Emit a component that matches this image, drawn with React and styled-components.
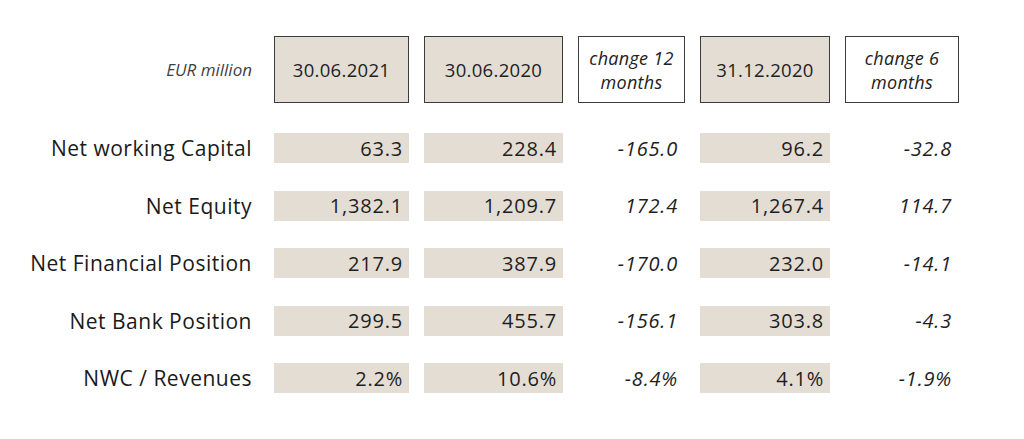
import React from "react";
import styled, { createGlobalStyle } from "styled-components";

const GlobalStyle = createGlobalStyle`
  html, body {
    margin: 0;
    padding: 0;
    background: #ffffff;
  }
  body {
    font-family: "Open Sans", "Noto Sans", "Liberation Sans", sans-serif;
    color: #1e1e1e;
  }
`;

const Page = styled.div`
  width: 1024px;
  height: 439px;
  box-sizing: border-box;
  padding-top: 36px;
`;

const Table = styled.div`
  display: grid;
  grid-template-columns: 259px 135px 139px 107px 130px 114px;
  grid-template-rows: 69.5px repeat(5, 30px);
  column-gap: 15px;
  row-gap: 27.5px;
`;

const Unit = styled.div`
  height: 67px;
  display: flex;
  align-items: center;
  justify-content: flex-end;
  padding-right: 7px;
  font-size: 17px;
  font-style: italic;
  color: #3f3f3f;
`;

const HeadBox = styled.div`
  box-sizing: border-box;
  height: 67px;
  display: flex;
  align-items: center;
  justify-content: center;
  text-align: center;
  border: 1px solid #3c3c3c;
  background: ${({ shaded }) => (shaded ? "#e4ddd4" : "#ffffff")};
  font-size: ${({ shaded }) => (shaded ? "18.5px" : "18px")};
  font-style: ${({ shaded }) => (shaded ? "normal" : "italic")};
  line-height: 24px;
  color: #222222;
  letter-spacing: 0.3px;
`;

const Label = styled.div`
  display: flex;
  align-items: center;
  justify-content: flex-end;
  padding-right: 7px;
  font-size: 21px;
  color: #1a1a1a;
  white-space: nowrap;
  letter-spacing: 0.5px;
`;

const Value = styled.div`
  display: flex;
  align-items: center;
  justify-content: flex-end;
  padding-right: ${({ shaded }) => (shaded ? "6px" : "7px")};
  background: ${({ shaded }) => (shaded ? "#e4ddd4" : "transparent")};
  font-size: 20px;
  font-style: ${({ shaded }) => (shaded ? "normal" : "italic")};
  color: #1e1e1e;
  letter-spacing: 0.8px;
  white-space: nowrap;
`;

const headers = [
  { text: "30.06.2021", shaded: true },
  { text: "30.06.2020", shaded: true },
  { text: ["change 12", "months"], shaded: false },
  { text: "31.12.2020", shaded: true },
  { text: ["change 6", "months"], shaded: false },
];

const rows = [
  ["Net working Capital", "63.3", "228.4", "-165.0", "96.2", "-32.8"],
  ["Net Equity", "1,382.1", "1,209.7", "172.4", "1,267.4", "114.7"],
  ["Net Financial Position", "217.9", "387.9", "-170.0", "232.0", "-14.1"],
  ["Net Bank Position", "299.5", "455.7", "-156.1", "303.8", "-4.3"],
  ["NWC / Revenues", "2.2%", "10.6%", "-8.4%", "4.1%", "-1.9%"],
];

const shadedCols = [true, true, false, true, false];

export default function App() {
  return (
    <Page>
      <GlobalStyle />
      <Table>
        <Unit>EUR million</Unit>
        {headers.map((h, i) => (
          <HeadBox key={i} shaded={h.shaded}>
            {Array.isArray(h.text) ? (
              <span>
                {h.text[0]}
                <br />
                {h.text[1]}
              </span>
            ) : (
              h.text
            )}
          </HeadBox>
        ))}
        {rows.map((r) => (
          <React.Fragment key={r[0]}>
            <Label>{r[0]}</Label>
            {r.slice(1).map((v, i) => (
              <Value key={i} shaded={shadedCols[i]}>
                {v}
              </Value>
            ))}
          </React.Fragment>
        ))}
      </Table>
    </Page>
  );
}
